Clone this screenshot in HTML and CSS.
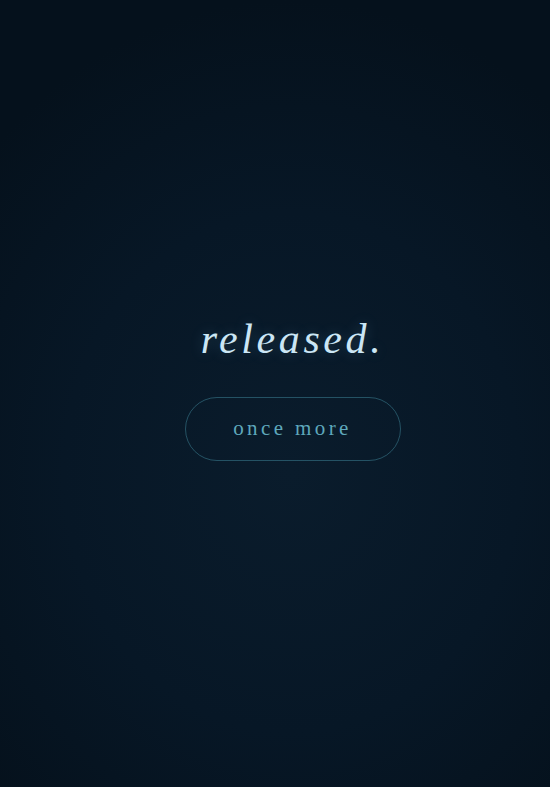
FILE: index.html
```html
<!DOCTYPE html>
<html lang="en">
<head>
<meta charset="utf-8">
<title>released.</title>
<link rel="stylesheet" href="styles.css">
</head>
<body>
<main class="stage">
  <h1 class="title">released.</h1>
  <button class="again" type="button">once more</button>
</main>
</body>
</html>
```
FILE: styles.css
```css
html, body {
  margin: 0;
  padding: 0;
  height: 100%;
}
body {
  background: radial-gradient(ellipse 75% 60% at 53% 60%, #0a1c2c 0%, #071726 55%, #05111c 100%);
  background-color: #05111c;
  font-family: "Liberation Serif", "DejaVu Serif", serif;
}
.stage {
  height: 100%;
  display: flex;
  flex-direction: column;
  align-items: center;
  justify-content: center;
  padding-left: 35px;
  padding-bottom: 11px;
  box-sizing: border-box;
}
.title {
  margin: 0 0 34px 0;
  font-style: italic;
  font-weight: 400;
  font-size: 42px;
  line-height: 48px;
  letter-spacing: 3.6px;
  color: #cbe6f5;
  text-shadow: 0 0 14px rgba(140, 200, 235, 0.22);
}
.again {
  width: 216px;
  height: 64px;
  border-radius: 32px;
  border: 1px solid rgba(70, 150, 170, 0.45);
  background: transparent;
  color: #5ea8bc;
  font-family: "Liberation Serif", "DejaVu Serif", serif;
  font-size: 21px;
  letter-spacing: 3.4px;
  padding: 0 0 2px 0;
  cursor: pointer;
}
```
